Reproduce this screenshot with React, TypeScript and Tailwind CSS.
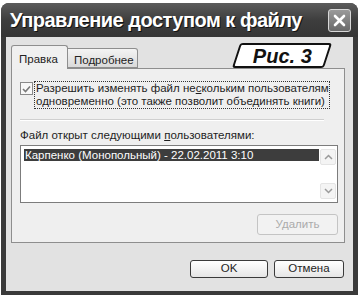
import React from 'react';

// XP-style "share workbook" dialog, grayscale
const ui = { fontFamily: '"Liberation Sans", Arial, sans-serif' };

const Arrow: React.FC<{ up?: boolean }> = ({ up }) => (
  <svg width="9" height="6" viewBox="0 0 9 6">
    <path d={up ? 'M1 5 L4.5 1.5 L8 5' : 'M1 1 L4.5 4.5 L8 1'} fill="none" stroke="#9a9a9a" strokeWidth="1.5" />
  </svg>
);

const App: React.FC = () => {
  return (
    <div className="w-[360px] h-[297px] bg-white pt-[3px] pl-[1px] relative" style={ui}>
      <div className="w-[357px] h-[292px] flex flex-col rounded-t-[8px] overflow-hidden bg-[#3a3a3a]">
        {/* title bar */}
        <div className="h-[34px] shrink-0 flex items-center justify-between pl-[9px] pr-[7px] bg-gradient-to-b from-[#5c5c5c] via-[#3e3e3e] to-[#353535]">
          <span
            className="text-white font-bold text-[20px] leading-none whitespace-nowrap tracking-[-0.5px]"
            style={{ textShadow: '1px 1px 0 #111' }}
          >
            Управление доступом к файлу
          </span>
          <div className="w-[23px] h-[23px] rounded-[3px] border border-[#d8d8d8] bg-gradient-to-b from-[#9a9a9a] to-[#6a6a6a] flex items-center justify-center">
            <svg width="13" height="13" viewBox="0 0 13 13">
              <path d="M2 2 L11 11 M11 2 L2 11" stroke="white" strokeWidth="2.6" strokeLinecap="round" />
            </svg>
          </div>
        </div>

        {/* body */}
        <div className="flex-1 mx-[5px] mb-[4px] bg-[#e2e2e2] pt-[8px] pl-[5px] pr-[8px] flex flex-col">
          {/* tabs */}
          <div className="flex items-end h-[24px] relative z-10">
            <div className="w-[57px] h-[24px] bg-[#f0f0f0] border border-b-0 border-[#8e8e8e] rounded-t-[3px] text-[11.5px] text-[#222] pl-[7px] pt-[5px]">
              Правка
            </div>
            <div className="w-[70px] h-[20px] bg-gradient-to-b from-[#f4f4f4] to-[#dadada] border border-l-0 border-[#8e8e8e] rounded-tr-[3px] text-[11.5px] text-[#222] pl-[6px] pt-[3px] mb-[1px]">
              Подробнее
            </div>
          </div>

          {/* panel */}
          <div className="h-[175px] -mt-[1px] bg-[#efefef] border border-[#8e8e8e] pl-[8px] pr-[6px] pt-[12px] flex flex-col">
            <div className="flex items-start">
              <div className="w-[13px] h-[13px] mt-[1px] border border-[#8a8a8a] bg-[#f8f8f8] flex items-center justify-center shrink-0">
                <svg width="9" height="8" viewBox="0 0 9 8">
                  <path d="M1 4 L3.5 6.5 L8 1.5" fill="none" stroke="#7a7a7a" strokeWidth="1.6" />
                </svg>
              </div>
              <div className="ml-[1px] border border-dotted border-[#333] px-[1px] text-[11.5px] leading-[13px] text-[#1e1e1e] w-[296px] whitespace-nowrap">
                Разрешить изменять файл не<span className="underline">с</span>кольким пользователям
                <br />
                одновременно (это также позволит объединять книги)
              </div>
            </div>

            <div className="mt-[10px] h-[2px] border-t border-[#cfcfcf] border-b-white border-b mr-[14px]" />

            <div className="mt-[7px] text-[11.5px] leading-[14px] text-[#1e1e1e]">
              Файл открыт следующими <span className="underline">п</span>ользователями:
            </div>

            <div className="mt-[3px] h-[58px] border border-[#7c7c7c] bg-white flex p-[3px] pr-[1px]">
              <div className="flex-1">
                <div className="h-[12px] bg-[#3d3d3d] text-white text-[11.5px] leading-[12px] pl-[1px]">
                  Карпенко (Монопольный) - 22.02.2011 3:10
                </div>
              </div>
              <div className="w-[16px] flex flex-col justify-between ml-[1px]">
                <div className="h-[16px] rounded-[2px] border border-[#e4e4e4] bg-[#f4f4f4] flex items-center justify-center">
                  <Arrow up />
                </div>
                <div className="h-[16px] rounded-[2px] border border-[#e4e4e4] bg-[#f4f4f4] flex items-center justify-center">
                  <Arrow />
                </div>
              </div>
            </div>

            <div className="mt-[11px] flex justify-end">
              <div className="w-[81px] h-[21px] rounded-[3px] border border-[#c4c4c4] bg-[#f2f2f2] text-[11.5px] text-[#ababab] flex items-center justify-center">
                Удалить
              </div>
            </div>
          </div>

          {/* footer buttons */}
          <div className="mt-[17px] flex justify-end gap-[6px] pr-[1px]">
            <div className="w-[78px] h-[18px] rounded-[3px] border border-[#3a3a3a] bg-gradient-to-b from-white to-[#e6e6e6] text-[11.5px] text-[#1e1e1e] flex items-center justify-center">
              OK
            </div>
            <div className="w-[70px] h-[18px] rounded-[3px] border border-[#3a3a3a] bg-gradient-to-b from-white to-[#e6e6e6] text-[11.5px] text-[#1e1e1e] flex items-center justify-center">
              Отмена
            </div>
          </div>
        </div>
      </div>

      {/* figure label callout */}
      <div className="absolute left-[236px] top-[43px] w-[92px] h-[25px] -skew-x-[18deg] border-2 border-[#111] rounded-[3px] bg-white flex items-center justify-center">
        <span className="skew-x-[18deg] italic font-bold text-[20px] text-[#111] leading-none">
          Рис. 3
        </span>
      </div>
    </div>
  );
};

export default App;
